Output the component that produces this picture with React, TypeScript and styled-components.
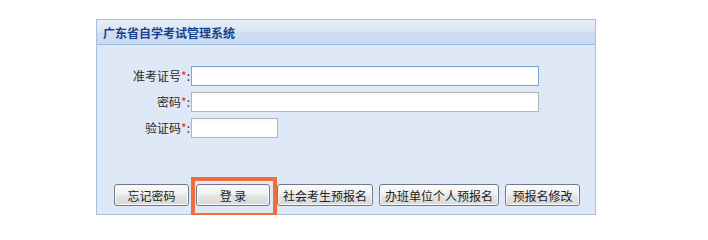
import React from 'react';
import styled, { createGlobalStyle } from 'styled-components';

const GlobalStyle = createGlobalStyle`
  body {
    margin: 0;
    background: #ffffff;
    font-family: "Noto Sans CJK SC", "Noto Sans", sans-serif;
    font-size: 12px;
    color: #222;
  }
`;

const Page = styled.div`
  padding: 19px 0 0 96px;
`;

const Panel = styled.section`
  width: 498px;
  border: 1px solid #a8c0dc;
  background: #dfe8f6;
`;

const PanelHeader = styled.header`
  height: 24px;
  display: flex;
  align-items: center;
  padding-left: 6px;
  background: linear-gradient(#e6eef8 0%, #dbe6f4 45%, #cddcf0 55%, #c9daf0 100%);
  border-bottom: 1px solid #99bbe8;
  color: #15428b;
  font-weight: bold;
  font-size: 12px;
`;

const PanelBody = styled.div`
  padding: 21px 0 8px 17px;
`;

const Form = styled.div`
  display: grid;
  grid-template-columns: 76px auto;
  row-gap: 6px;
  column-gap: 1px;
  align-items: center;
  justify-items: start;
`;

const Label = styled.label`
  justify-self: end;
  line-height: 20px;
  color: #2a2a2a;
`;

const Star = styled.span`
  color: #e03030;
`;

const Field = styled.input<{ $width: number; $focus?: boolean }>`
  box-sizing: border-box;
  width: ${p => p.$width}px;
  height: 20px;
  margin: 0;
  padding: 0 3px;
  font: inherit;
  background: linear-gradient(#f4f4f4 0px, #ffffff 3px);
  border: 1px solid ${p => (p.$focus ? '#7ea6d8' : '#b4b4b4')};
  box-shadow: ${p => (p.$focus ? 'inset 0 0 1px #c5daf2' : 'none')};
  outline: none;
`;

const Actions = styled.div`
  display: flex;
  gap: 6px;
  margin-top: 46px;
`;

const ButtonSpot = styled.span`
  position: relative;
  display: inline-flex;
  margin: 0 1px;

  &::after {
    content: '';
    position: absolute;
    left: -5px;
    right: -7px;
    top: -7px;
    bottom: -11px;
    border: 4px solid #f26b3a;
    pointer-events: none;
  }
`;

const Button = styled.button<{ $min?: number }>`
  box-sizing: border-box;
  min-width: ${p => p.$min ?? 75}px;
  height: 22px;
  padding: 0 5px;
  margin: 0;
  font: inherit;
  font-size: 12px;
  color: #222;
  border: 1px solid #6f7a88;
  border-radius: 3px;
  background: linear-gradient(#fbfbfb 0%, #f0f0f0 45%, #e3e3e3 55%, #dadada 100%);
  box-shadow: inset 0 0 0 1px #fafafa;
  white-space: nowrap;
`;

export default function App() {
  return (
    <Page>
      <GlobalStyle />
      <Panel>
        <PanelHeader>广东省自学考试管理系统</PanelHeader>
        <PanelBody>
          <Form>
            <Label>准考证号<Star>*</Star>:</Label>
            <Field $width={348} $focus />
            <Label>密码<Star>*</Star>:</Label>
            <Field $width={348} type="password" />
            <Label>验证码<Star>*</Star>:</Label>
            <Field $width={87} />
          </Form>
          <Actions>
            <Button>忘记密码</Button>
            <ButtonSpot>
              <Button $min={74}>登 录</Button>
            </ButtonSpot>
            <Button>社会考生预报名</Button>
            <Button>办班单位个人预报名</Button>
            <Button>预报名修改</Button>
          </Actions>
        </PanelBody>
      </Panel>
    </Page>
  );
}
